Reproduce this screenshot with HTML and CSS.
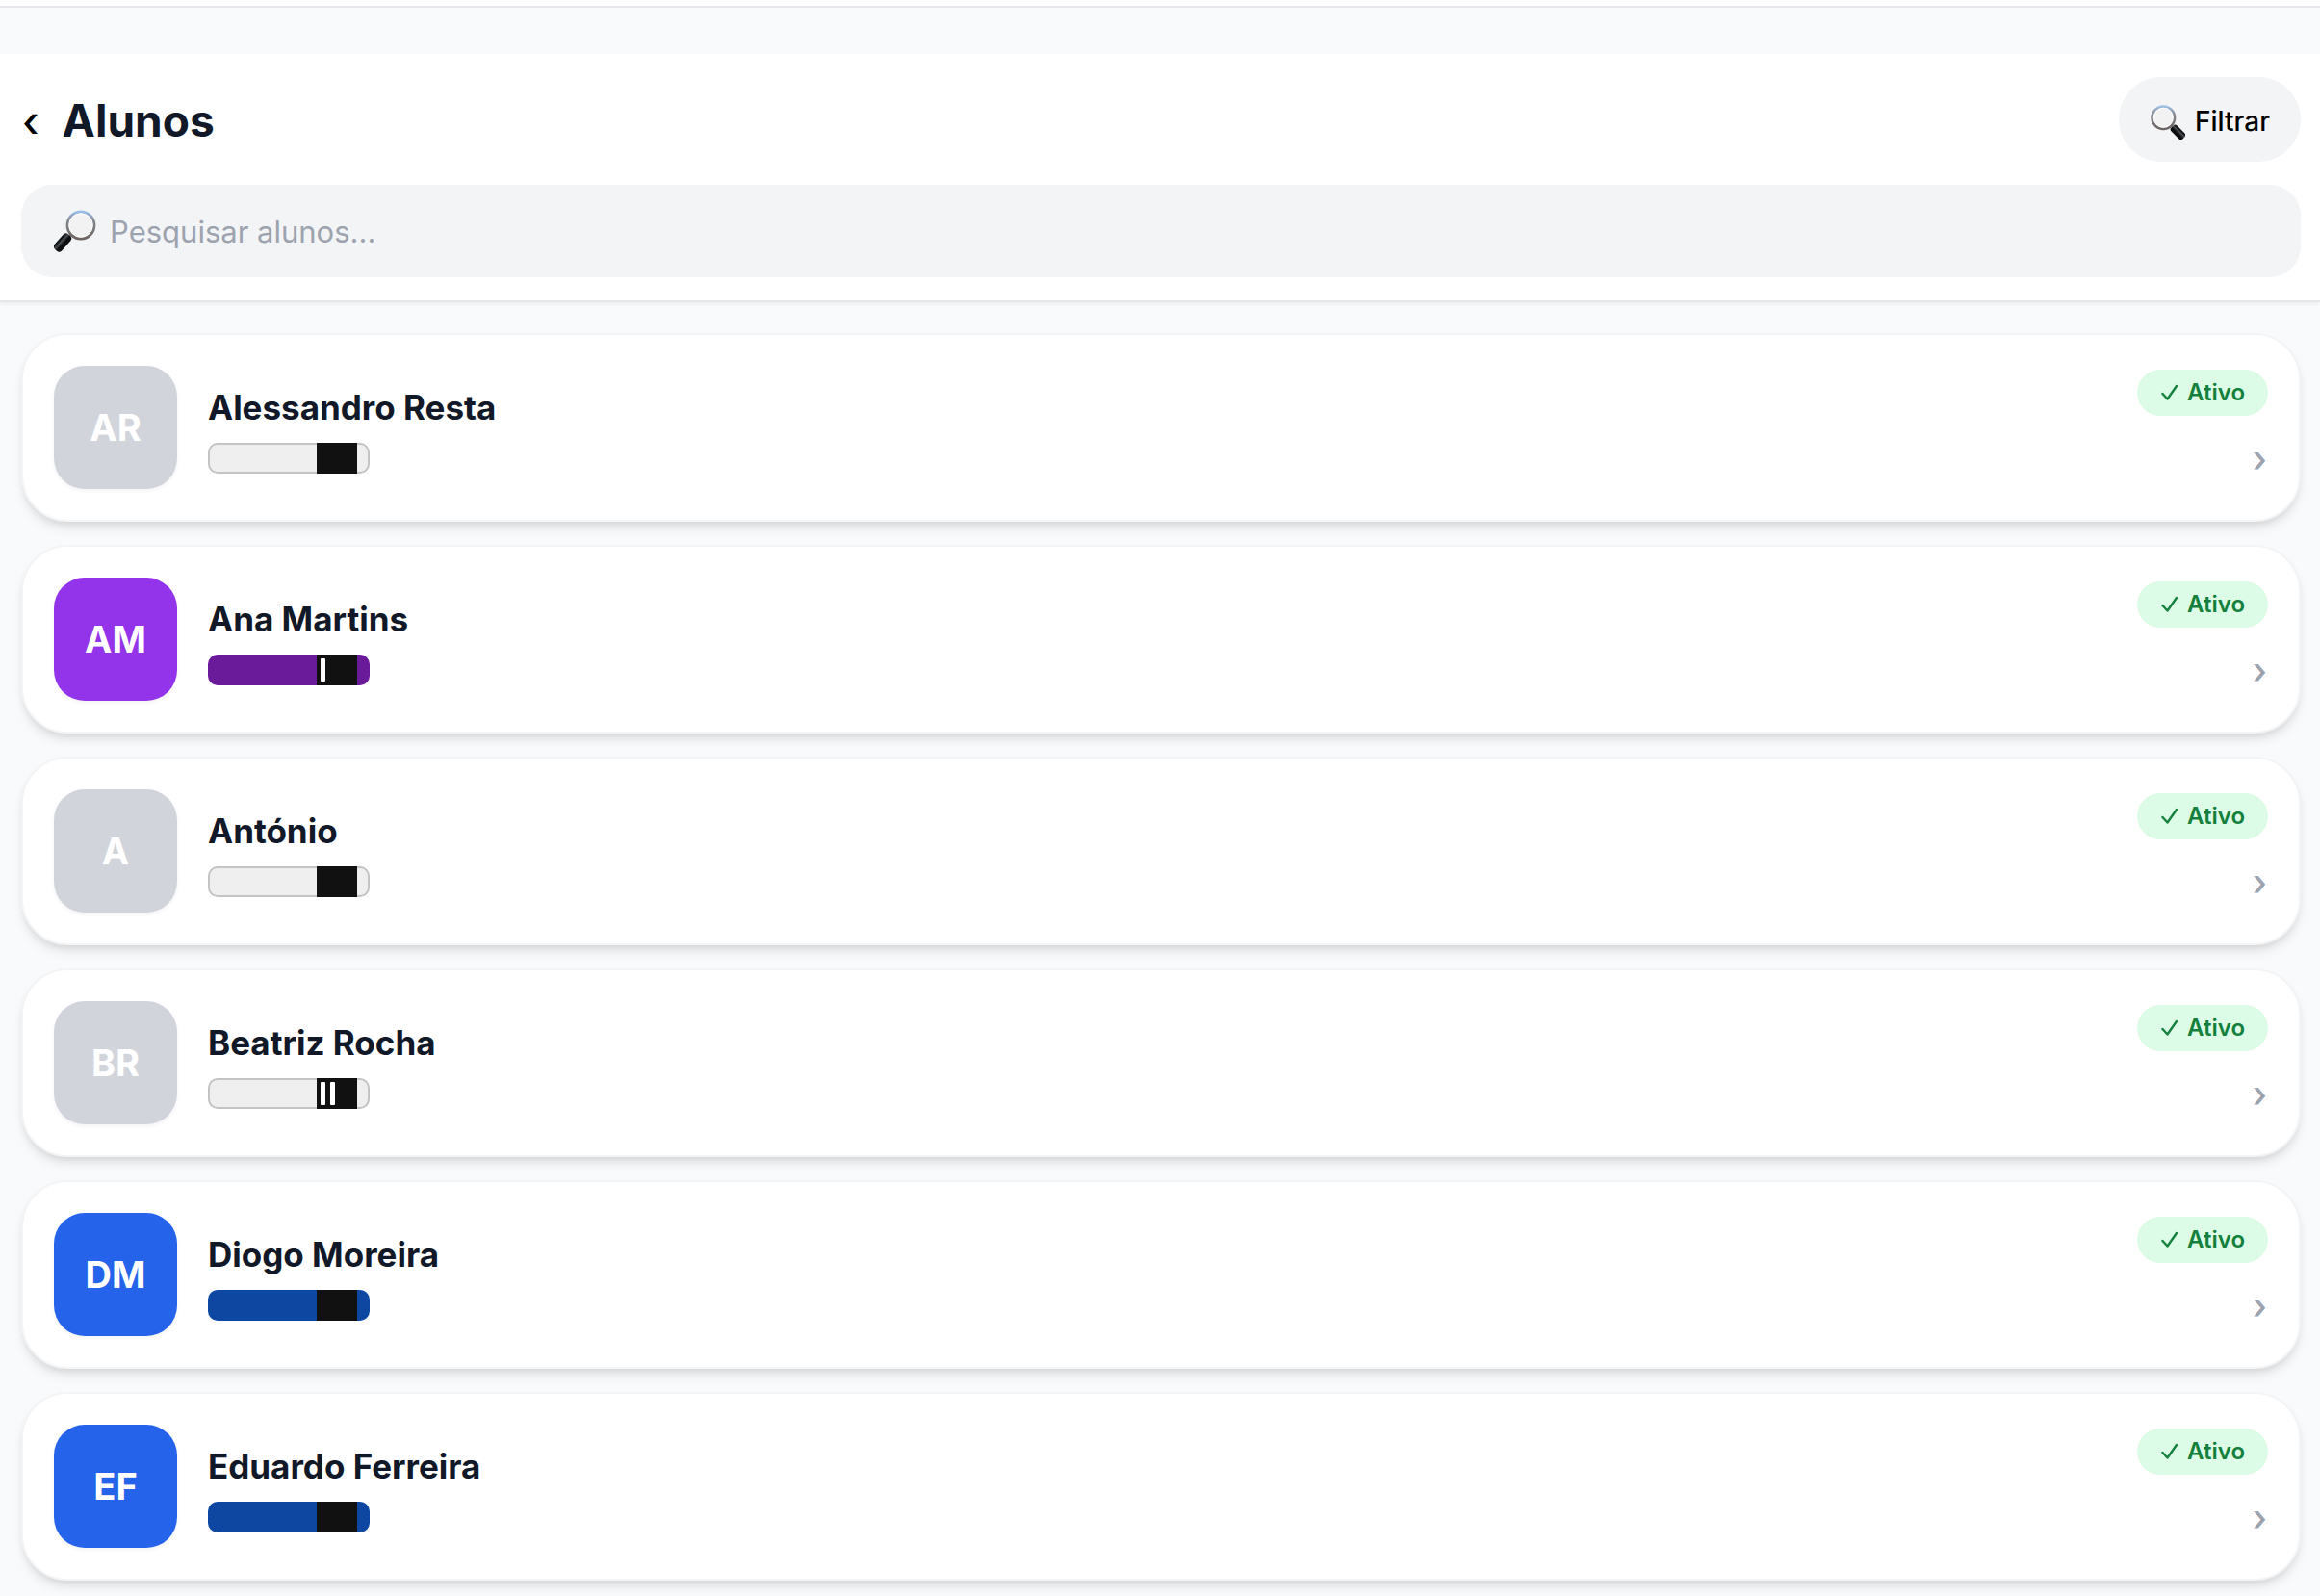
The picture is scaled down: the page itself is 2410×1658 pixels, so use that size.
FILE: index.html
```html
<!DOCTYPE html>
<html lang="pt">
<head>
    <meta charset="UTF-8">
    <meta name="viewport" content="width=device-width, initial-scale=1.0">
    <title>Alunos</title>
    <link rel="stylesheet" href="styles.css">
</head>
<body>
    <!-- Shared drawings -->
    <svg class="defs" aria-hidden="true">
        <defs>
            <linearGradient id="rim" x1="0" y1="0" x2="0" y2="1">
                <stop offset="0" stop-color="#9dbfe4"/>
                <stop offset="0.35" stop-color="#85888d"/>
                <stop offset="1" stop-color="#6c6461"/>
            </linearGradient>
            <linearGradient id="grip" x1="0" y1="0" x2="0" y2="1">
                <stop offset="0.1" stop-color="#0c0e10"/>
                <stop offset="0.35" stop-color="#4b5055"/>
                <stop offset="0.6" stop-color="#0c0e10"/>
            </linearGradient>
            <symbol id="lens" viewBox="0 0 44 44">
                <path d="M25 25l5 5" stroke="#8d8f93" stroke-width="3"/>
                <rect x="-10" y="-5" width="20" height="10" rx="3.5" fill="url(#grip)" transform="translate(35 35) rotate(45)"/>
                <circle cx="17" cy="17" r="14" fill="#f2f2f3" stroke="url(#rim)" stroke-width="3"/>
                <circle cx="17" cy="17" r="12" fill="none" stroke="#fff" stroke-width="1"/>
            </symbol>
            <symbol id="lens-right" viewBox="0 0 44 44">
                <path d="M18 26l-5 6" stroke="#8d8f93" stroke-width="3"/>
                <rect x="-10.5" y="-5" width="21" height="10" rx="4" fill="url(#grip)" transform="translate(9 34) rotate(-48)"/>
                <circle cx="28" cy="16" r="14" fill="#f2f2f3" stroke="url(#rim)" stroke-width="2.8"/>
                <circle cx="28" cy="16" r="12.2" fill="none" stroke="#fff" stroke-width="1"/>
            </symbol>
            <symbol id="check" viewBox="0 0 18 18">
                <path d="M1.5 10l5 5.5L16 2" fill="none" stroke="currentColor" stroke-width="2.4" stroke-linecap="round" stroke-linejoin="round"/>
            </symbol>
        </defs>
    </svg>

    <div class="topbar"></div>

    <header class="header">
        <div class="header-row">
            <button class="back-btn" type="button" aria-label="Voltar">‹</button>
            <h1>Alunos</h1>
            <button class="filter-btn" type="button">
                <svg class="filter-icon" aria-hidden="true"><use href="#lens"/></svg>
                Filtrar
            </button>
        </div>
        <label class="search">
            <svg class="search-icon" aria-hidden="true"><use href="#lens-right"/></svg>
            <input type="text" placeholder="Pesquisar alunos..." aria-label="Pesquisar alunos">
        </label>
    </header>

    <main>
        <ul class="list">
            <li>
                <a class="card" href="#">
                    <span class="avatar white">AR</span>
                    <span class="info">
                        <span class="name">Alessandro Resta</span>
                        <span class="belt white"><span class="tip"></span></span>
                    </span>
                    <span class="side">
                        <span class="badge"><svg class="check" aria-hidden="true"><use href="#check"/></svg>Ativo</span>
                        <span class="chevron">›</span>
                    </span>
                </a>
            </li>
            <li>
                <a class="card" href="#">
                    <span class="avatar purple">AM</span>
                    <span class="info">
                        <span class="name">Ana Martins</span>
                        <span class="belt purple"><span class="tip"><i></i></span></span>
                    </span>
                    <span class="side">
                        <span class="badge"><svg class="check" aria-hidden="true"><use href="#check"/></svg>Ativo</span>
                        <span class="chevron">›</span>
                    </span>
                </a>
            </li>
            <li>
                <a class="card" href="#">
                    <span class="avatar white">A</span>
                    <span class="info">
                        <span class="name">António</span>
                        <span class="belt white"><span class="tip"></span></span>
                    </span>
                    <span class="side">
                        <span class="badge"><svg class="check" aria-hidden="true"><use href="#check"/></svg>Ativo</span>
                        <span class="chevron">›</span>
                    </span>
                </a>
            </li>
            <li>
                <a class="card" href="#">
                    <span class="avatar white">BR</span>
                    <span class="info">
                        <span class="name">Beatriz Rocha</span>
                        <span class="belt white"><span class="tip"><i></i><i></i></span></span>
                    </span>
                    <span class="side">
                        <span class="badge"><svg class="check" aria-hidden="true"><use href="#check"/></svg>Ativo</span>
                        <span class="chevron">›</span>
                    </span>
                </a>
            </li>
            <li>
                <a class="card" href="#">
                    <span class="avatar blue">DM</span>
                    <span class="info">
                        <span class="name">Diogo Moreira</span>
                        <span class="belt blue"><span class="tip"></span></span>
                    </span>
                    <span class="side">
                        <span class="badge"><svg class="check" aria-hidden="true"><use href="#check"/></svg>Ativo</span>
                        <span class="chevron">›</span>
                    </span>
                </a>
            </li>
            <li>
                <a class="card" href="#">
                    <span class="avatar blue">EF</span>
                    <span class="info">
                        <span class="name">Eduardo Ferreira</span>
                        <span class="belt blue"><span class="tip"></span></span>
                    </span>
                    <span class="side">
                        <span class="badge"><svg class="check" aria-hidden="true"><use href="#check"/></svg>Ativo</span>
                        <span class="chevron">›</span>
                    </span>
                </a>
            </li>
        </ul>
    </main>
</body>
</html>
```

FILE: styles.css
```css
* {
    margin: 0;
    padding: 0;
    box-sizing: border-box;
}

body {
    font-family: 'Inter', 'Liberation Sans', sans-serif;
    background-color: #f9fafb;
    color: #111827;
}

button,
input {
    font-family: inherit;
    border: none;
    background: none;
}

button {
    cursor: pointer;
}

.defs {
    display: block;
    width: 0;
    height: 0;
}

.topbar {
    height: 8px;
    background-color: #fff;
    border-bottom: 2px solid #e5e7eb;
    margin-bottom: 48px;
}

/* Header */
.header {
    background-color: #fff;
    border-bottom: 2px solid #e5e7eb;
    box-shadow: 0 2px 4px rgba(0, 0, 0, 0.05);
    padding: 24px 20px 24px 22px;
}

.header-row {
    display: flex;
    align-items: center;
    gap: 24px;
    margin-bottom: 24px;
}

.back-btn {
    padding: 4px 0 0 1px;
    font-size: 44px;
    line-height: 56px;
    font-weight: 500;
    color: #000;
}

h1 {
    flex: 1;
    padding-top: 2px;
    font-size: 46px;
    line-height: 64px;
    font-weight: 700;
}

.filter-btn {
    display: flex;
    align-items: center;
    gap: 10px;
    height: 88px;
    padding: 4px 32px 0;
    border-radius: 44px;
    background-color: #f3f4f6;
    color: #000;
    font-size: 28px;
    font-weight: 500;
}

.filter-icon {
    width: 37px;
    height: 37px;
}

.search {
    display: flex;
    align-items: center;
    gap: 14px;
    height: 96px;
    padding: 0 34px;
    border-radius: 32px;
    background-color: #f3f4f6;
}

.search-icon {
    width: 44px;
    height: 44px;
}

.search input {
    flex: 1;
    padding-top: 2px;
    font-size: 31px;
    line-height: 48px;
    color: #111827;
    outline: none;
}

.search input::placeholder {
    color: #9ca3af;
}

/* Student list */
.list {
    list-style: none;
    display: flex;
    flex-direction: column;
    gap: 24px;
    padding: 32px 20px 16px 22px;
}

.card {
    display: flex;
    align-items: center;
    gap: 32px;
    padding: 32px;
    background-color: #fff;
    border: 2px solid #f3f4f6;
    border-radius: 48px;
    box-shadow: 0 8px 12px -2px rgba(0, 0, 0, 0.1), 0 4px 8px -4px rgba(0, 0, 0, 0.1);
    color: inherit;
    text-decoration: none;
}

.avatar {
    display: flex;
    align-items: center;
    justify-content: center;
    width: 128px;
    height: 128px;
    border-radius: 32px;
    box-shadow: 0 2px 4px rgba(0, 0, 0, 0.05);
    color: #fff;
    font-size: 38px;
    line-height: 48px;
    font-weight: 700;
}

.avatar.white {
    background-color: #d1d5db;
}

.avatar.purple {
    background-color: #9333ea;
}

.avatar.blue {
    background-color: #2563eb;
}

.info {
    flex: 1;
    display: flex;
    flex-direction: column;
    gap: 10px;
}

.name {
    font-size: 35px;
    line-height: 54px;
    font-weight: 700;
}

.belt {
    display: flex;
    justify-content: flex-end;
    width: 168px;
    height: 32px;
    padding-right: 11px;
    border: 2px solid;
    border-radius: 10px;
}

.belt.white {
    background-color: #efefef;
    border-color: #c4c4c4;
}

.belt.purple {
    background-color: #6a1b9a;
    border-color: #6a1b9a;
}

.belt.blue {
    background-color: #0d47a1;
    border-color: #0d47a1;
}

/* Black tip of the belt, one bar per degree */
.tip {
    display: flex;
    align-items: center;
    gap: 5px;
    width: 42px;
    height: 32px;
    margin: -2px 0;
    padding-left: 4px;
    background-color: #111;
}

.tip i {
    width: 5px;
    height: 24px;
    border-radius: 1px;
    background-color: #fff;
}

.side {
    display: flex;
    flex-direction: column;
    align-items: flex-end;
    gap: 16px;
}

.badge {
    display: flex;
    align-items: center;
    gap: 9px;
    padding: 0 24px 0 25px;
    border-radius: 24px;
    background-color: #dcfce7;
    color: #15803d;
    font-size: 24px;
    line-height: 48px;
    font-weight: 600;
}

.check {
    width: 18px;
    height: 18px;
}

.chevron {
    padding-right: 1px;
    color: #9ca3af;
    font-size: 38px;
    line-height: 56px;
    font-weight: 500;
}
```
